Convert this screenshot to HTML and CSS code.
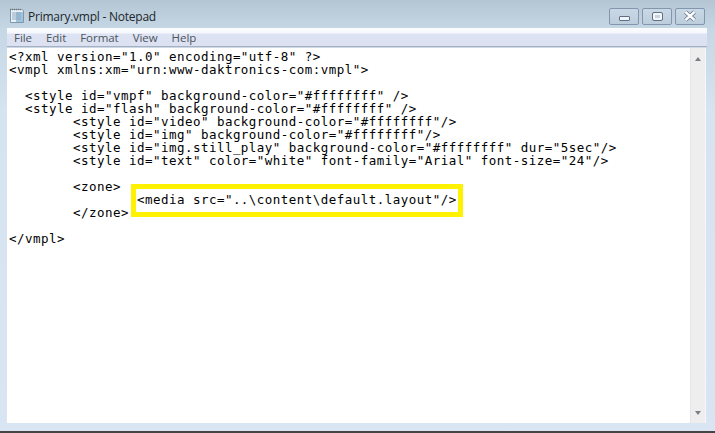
FILE: index.html
```html
<!DOCTYPE html>
<html lang="en">
<head>
<meta charset="utf-8">
<title>Primary.vmpl - Notepad</title>
<link rel="stylesheet" href="styles.css">
</head>
<body>
<div class="window">
  <header class="titlebar">
    <svg class="app-icon" width="17" height="17" viewBox="0 0 17 17" aria-hidden="true">
      <path d="M2.5 2.5h11l2 1v12h-13z" fill="#e8f1f8" stroke="#7f97ad"/>
      <path d="M2 2.5h12" stroke="#777" stroke-width="1.4" stroke-dasharray="1 1"/>
      <path d="M8 5v10h7V5z" fill="#9fc4de"/>
      <path d="M4 6h9M4 8h9M4 10h9M4 12h9" stroke="#8fa8bd"/>
    </svg>
    <span class="title">Primary.vmpl - Notepad</span>
    <div class="controls">
      <div class="ctl"><span class="glyph-min"></span></div>
      <div class="ctl"><span class="glyph-max"></span></div>
      <div class="ctl">
        <svg width="14" height="12" viewBox="0 0 14 12" aria-hidden="true">
          <path d="M2.5 2L11.5 10M11.5 2L2.5 10" stroke="#5f6f86" stroke-width="4"/>
          <path d="M2.5 2L11.5 10M11.5 2L2.5 10" stroke="#fff" stroke-width="2.4"/>
        </svg>
      </div>
    </div>
  </header>
  <nav class="menubar">
    <span>File</span><span>Edit</span><span>Format</span><span>View</span><span>Help</span>
  </nav>
  <main class="editor">
<pre class="code">&lt;?xml version="1.0" encoding="utf-8" ?&gt;
&lt;vmpl xmlns:xm="urn:www-daktronics-com:vmpl"&gt;

  &lt;style id="vmpf" background-color="#ffffffff" /&gt;
  &lt;style id="flash" background-color="#ffffffff" /&gt;
        &lt;style id="video" background-color="#ffffffff"/&gt;
        &lt;style id="img" background-color="#ffffffff"/&gt;
        &lt;style id="img.still_play" background-color="#ffffffff" dur="5sec"/&gt;
        &lt;style id="text" color="white" font-family="Arial" font-size="24"/&gt;

        &lt;zone&gt;
                &lt;media src="..\content\default.layout"/&gt;
        &lt;/zone&gt;

&lt;/vmpl&gt;</pre>
    <div class="highlight"></div>
    <aside class="scrollbar">
      <span class="arrow-up"></span>
      <span class="arrow-down"></span>
    </aside>
  </main>
  <div class="baseline"></div>
</div>
</body>
</html>
```
FILE: styles.css
```css
html, body {
  margin: 0;
  padding: 0;
  height: 100%;
  overflow: hidden;
}
.window {
  width: 715px;
  height: 433px;
  display: flex;
  flex-direction: column;
  background: linear-gradient(180deg, #b4c6d3 0, #c6d7e5 30px, #d6e3f0 110px, #d9e5f2 100%);
  box-sizing: border-box;
}
.titlebar {
  height: 28px;
  flex: none;
  display: flex;
  align-items: center;
  padding: 0 10px 0 9px;
}
.app-icon {
  flex: none;
  margin-left: -1px;
  margin-top: 2px;
}
.title {
  margin-left: 3px;
  margin-top: 6px;
  font: 12px/16px "Open Sans", sans-serif;
  color: #20262c;
  letter-spacing: -.24px;
}
.controls {
  margin-left: auto;
  display: flex;
  gap: 3px;
  margin-top: 4px;
}
.ctl {
  width: 28px;
  height: 15px;
  border: 1px solid #8496ae;
  border-radius: 2px;
  background: linear-gradient(180deg, #c9d8e5, #bccddc);
  display: flex;
  align-items: center;
  justify-content: center;
}
.glyph-min {
  width: 9px;
  height: 3px;
  margin-top: 4px;
  background: #f1f4f8;
  border: 1px solid #5f6f86;
  border-radius: 1px;
}
.glyph-max {
  width: 5px;
  height: 3px;
  background: #c7d4e0;
  border: 2px solid #f4f6f9;
  outline: 1px solid #5f6f86;
  border-radius: 1px;
}
.menubar {
  height: 19px;
  flex: none;
  margin: 0 8px 0 7px;
  display: flex;
  gap: 14px;
  padding: 2px 0 0 7px;
  align-items: center;
  box-sizing: border-box;
  font: 11.5px/16px "Open Sans", sans-serif;
  letter-spacing: -.05px;
  color: #4b5560;
  background: linear-gradient(180deg, #fbfcfe 0, #f5f7fc 5px, #dde3f2 6px, #dbe1f1 100%);
  border-bottom: 1px solid #a9aec0;
}
.editor {
  position: relative;
  flex: none;
  height: 375px;
  margin: 1px 9px 0 7px;
  background: #fff;
  overflow: hidden;
}
.code {
  margin: 0;
  padding: 2px 0 0 2px;
  font: 12.5px/13px "DejaVu Sans Mono", monospace;
  letter-spacing: .47px;
  color: #000;
}
.highlight {
  position: absolute;
  left: 124px;
  top: 136px;
  width: 322px;
  height: 23px;
  border: 5px solid #fff200;
}
.scrollbar {
  position: absolute;
  right: 0;
  top: 0;
  bottom: 0;
  width: 16px;
  box-sizing: border-box;
  background: #eeeeee;
  border-left: 1px solid #e6e6e6;
  border-right: 1px solid #f7f7f7;
}
.arrow-up, .arrow-down {
  position: absolute;
  left: 4px;
  width: 0;
  height: 0;
  border-left: 3.5px solid transparent;
  border-right: 3.5px solid transparent;
}
.arrow-up {
  top: 9px;
  border-bottom: 4px solid #7b7f86;
}
.arrow-down {
  bottom: 8px;
  border-top: 4px solid #7b7f86;
}
.baseline {
  margin-top: auto;
  height: 2px;
  background: #454545;
}
```
